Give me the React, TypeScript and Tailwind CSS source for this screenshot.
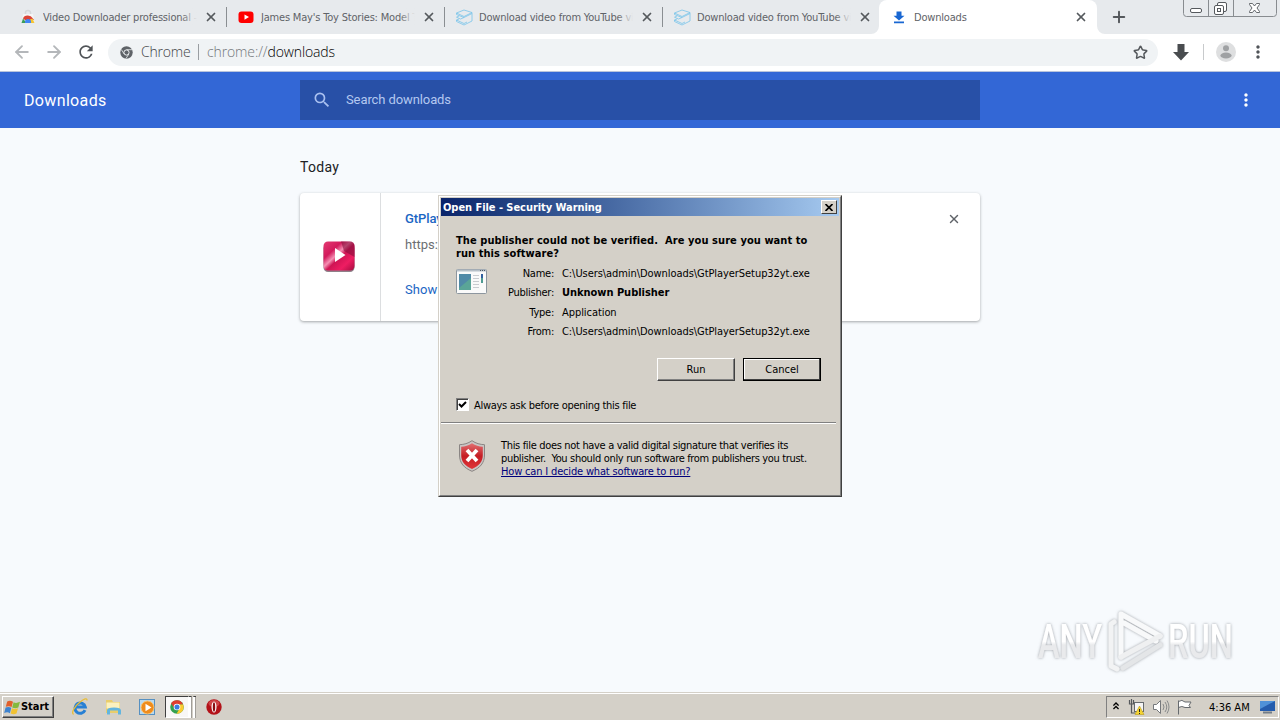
import type { ReactNode } from "react";
import { ArrowLeft, ArrowRight, Plus, Star, X } from "lucide-react";
import { MdMoreVert, MdRefresh, MdSearch } from "react-icons/md";

const StoreIcon = () => (
  <svg width="16" height="16" viewBox="0 0 16 16">
    <path d="M5.500 5V3.500a2.500 2 0 0 1 5 0V5" fill="none" stroke="#d5d8da" strokeWidth="1.500" />
    <path d="M3 5h10l1.500 9h-13z" fill="#f5f5f5" />
    <path d="M3 9.500a5 4 0 0 1 9.500-.5L14 11H5z" fill="#db4437" />
    <path d="M3 9.500L6.500 14H1.500z" fill="#3c9d58" />
    <path d="M12.500 9.500L14.500 14H9l1-3.500z" fill="#f4c534" />
    <path d="M5 12.500a3 2.500 0 0 1 6 0V14H5z" fill="#4285f4" />
  </svg>
);

const YouTubeIcon = () => (
  <svg width="16" height="16" viewBox="0 0 16 16">
    <rect x="0.500" y="2.500" width="15" height="11.500" rx="3" fill="#f00" />
    <path d="M6.500 5.500v5.200L11 8.100z" fill="#fff" />
  </svg>
);

const BoxIcon = () => (
  <svg width="17" height="17" viewBox="0 0 17 17" fill="none" stroke="#79c4ea" strokeWidth="0.800">
    <path d="M.5 4L8 1l8 2.500-8 4zM.5 4v1.500L8 8.500l8-4M8 8.500L4.500 10 .5 8.200 3 7M16 3.500v8.500l-8 4-7.500-3.500v-1.500L3 10M.5 11l7.500 3.500 3-1.500" />
  </svg>
);

const DownloadIcon = () => (
  <svg width="16" height="16" viewBox="0 0 16 16" fill="#1967d2">
    <path d="M5.500 2.500h5v4.200h3L8 11.600 2.500 6.700h3zM3 12.500h10v1.800H3z" />
  </svg>
);

const tabs = [
  { title: "Video Downloader professional - Chr", icon: <StoreIcon /> },
  { title: "James May's Toy Stories: Model Trai", icon: <YouTubeIcon /> },
  { title: "Download video from YouTube via", icon: <BoxIcon /> },
  { title: "Download video from YouTube via", icon: <BoxIcon /> },
];

function Tab({ title, icon, active }: { title: string; icon: ReactNode; active?: boolean }) {
  return (
    <div
      className={
        active
          ? "relative flex h-[34px] w-[218px] items-center rounded-t-lg bg-white pl-3 pr-[9px]"
          : "flex h-[34px] w-[218px] items-center pl-3 pr-2"
      }
    >
      <div className="flex w-[23px] shrink-0">{icon}</div>
      <div className="relative w-[154px] overflow-hidden whitespace-nowrap pt-[2px] text-[11px] tracking-[-0.190px] text-[#5f6368]">
        {title}
        {!active && <div className="absolute inset-y-0 right-0 w-4 bg-linear-to-r from-transparent to-[#e7eaed]" />}
      </div>
      <X className="ml-auto size-[14px] text-[#55595d]" strokeWidth={3} />
    </div>
  );
}

function WindowButtons() {
  return (
    <svg className="ml-auto mr-[3px] self-start" width="94" height="17" viewBox="0 0 94 17" fill="none" stroke="#888c90">
      <path d="M.5 0v13.500a3 3 0 0 0 3 3h87a3 3 0 0 0 3-3V0M25.500 0v16M50.500 0v16" />
      <g stroke="#55595d">
        <rect x="7.500" y="8.500" width="11" height="4" rx="1.500" fill="#fff" />
        <rect x="34.500" y="2.500" width="9" height="9" rx="1.500" fill="#fff" />
        <rect x="31.500" y="5.500" width="9" height="9" rx="1.500" fill="#fff" />
        <rect x="34.500" y="8.500" width="3" height="3" />
        <path d="M66.500 3.500h3l2 2.500 2-2.500h3v1L74 8l2.500 3.500v1h-3l-2-2.500-2 2.500h-3v-1L69 8l-2.500-3.500z" fill="#fff" strokeWidth="0.900" />
      </g>
    </svg>
  );
}

function TabStrip() {
  return (
    <div className="flex h-[34px] items-center bg-[#e7eaed] pl-2">
      {tabs.map((tab, i) => (
        <div key={i} className="flex items-center">
          <Tab {...tab} />
          {i < 3 && <div className="-mr-px h-5 w-px bg-[#8a8e92]" />}
        </div>
      ))}
      <div className="relative -ml-px flex">
        <Tab title="Downloads" icon={<DownloadIcon />} active />
        <svg className="absolute -left-2 bottom-0" width="8" height="8"><path d="M8 0a8 8 0 0 1-8 8h8z" fill="#fff" /></svg>
        <svg className="absolute -right-2 bottom-0" width="8" height="8"><path d="M0 0a8 8 0 0 0 8 8H0z" fill="#fff" /></svg>
      </div>
      <Plus className="ml-[13px] size-[18px] text-[#55595d]" strokeWidth={2.600} />
      <WindowButtons />
    </div>
  );
}

function Toolbar() {
  return (
    <div className="flex h-[38px] items-center border-b border-[#b9c4dc] bg-white pb-px pl-3">
      <ArrowLeft className="size-5 text-[#b4b7ba]" strokeWidth={2.200} />
      <ArrowRight className="ml-3 size-5 text-[#b4b7ba]" strokeWidth={2.200} />
      <MdRefresh className="ml-3 size-5 text-[#505458]" />
      <div className="ml-3 flex h-[27px] w-[1050px] items-center rounded-full bg-[#f0f3f5] pl-3 pr-[10px] font-['Open_Sans',sans-serif] text-[14px] text-[#3f4347]">
        <svg width="13" height="13" viewBox="0 0 13 13">
          <circle cx="6.500" cy="6.500" r="6.200" fill="#5f6368" />
          <circle cx="6.500" cy="6.500" r="2.600" fill="#5f6368" stroke="#eef1f3" />
          <path d="M6.500 3.700h5.500M4.200 8L1.300 3.500M8.900 8l-3 4.600" stroke="#eef1f3" strokeWidth="0.800" />
        </svg>
        <span className="ml-[8px] w-[50px] whitespace-nowrap pb-px font-light tracking-[-0.200px]">Chrome</span>
        <div className="ml-[7px] h-4 w-px bg-[#9a9ea2]" />
        <span className="ml-[8px] pb-px font-light tracking-[-0.120px] text-[#73777b]">
          chrome://<span className="text-black">downloads</span>
        </span>
        <Star className="ml-auto size-[15px] text-[#55595d]" strokeWidth={2.400} />
      </div>
      <svg className="ml-[15px]" width="16" height="17" viewBox="0 0 16 17">
        <path d="M4.500 0h7v8h4.500L8 16.500 0 8h4.500z" fill="#494c4f" />
      </svg>
      <div className="ml-[14px] h-4 w-px bg-[#c8cacc]" />
      <svg className="ml-3" width="20" height="20" viewBox="0 0 20 20">
        <circle cx="10" cy="10" r="10" fill="#dedfe0" />
        <circle cx="10" cy="6.200" r="3" fill="#9fa1a3" />
        <ellipse cx="10" cy="13.500" rx="5.600" ry="3" fill="#9fa1a3" />
      </svg>
      <MdMoreVert className="ml-[12px] size-5 text-[#505458]" />
    </div>
  );
}

function DownloadsHeader() {
  return (
    <div className="flex h-14 items-center bg-[#3367d6] font-[Roboto,sans-serif] text-white">
      <h1 className="w-[300px] pl-6 pt-[2px] text-[16px] tracking-[0.350px]">Downloads</h1>
      <div className="flex h-10 w-[680px] items-center bg-[#2850a7] pl-3">
        <MdSearch className="size-5 text-[#a9c0f0]" />
        <span className="ml-[14px] text-[13px] tracking-[-0.100px] text-[#b4c8f0]">Search downloads</span>
      </div>
      <MdMoreVert className="ml-auto mr-6 size-5" />
    </div>
  );
}

function DownloadsPage() {
  return (
    <div className="flex-1 bg-[#f7fafd] pt-[31px] font-[Roboto,sans-serif]">
      <div className="mx-auto w-[680px]">
        <h2 className="h-[34px] text-[14px] leading-4 tracking-[0.300px] text-[#202124]">Today</h2>
        <div className="flex h-32 rounded-sm bg-white shadow-[0_1px_3px_rgba(60,64,67,0.45)]">
          <div className="flex w-[81px] items-center justify-center border-r border-[#dcdee0] pr-[2px]">
            <svg width="32" height="32" viewBox="0 0 32 32">
              <defs>
                <linearGradient id="player" x1="0" y1="0" x2="1" y2="1">
                  <stop offset="0" stopColor="#e43a72" />
                  <stop offset="0.300" stopColor="#d31a5c" />
                  <stop offset="0.440" stopColor="#f590b4" />
                  <stop offset="0.540" stopColor="#cf1454" />
                  <stop offset="0.750" stopColor="#ee1d62" />
                  <stop offset="1" stopColor="#a50c40" />
                </linearGradient>
              </defs>
              <rect x="0.500" y="3" width="31" height="28" rx="4.500" fill="#8f8089" />
              <rect x="0.500" y="0.500" width="31" height="29" rx="4.500" fill="url(#player)" />
              <path d="M18 .5h9a4.500 4.500 0 0 1 4.500 4.500v11L21 10z" fill="#870f3c" opacity="0.600" />
              <path d="M12 7v14l10.500-7z" fill="#fff" />
            </svg>
          </div>
          <div className="flex-1 pl-6 pt-[18px] text-[13px] leading-4 text-[#1b66c4]">
            <p className="tracking-[-0.100px] font-medium">GtPlayerSetup32yt.exe</p>
            <p className="mt-[10px] text-[#6b6f73]">https://gtplayer.com/</p>
            <p className="mt-[29px] tracking-[0.100px]">Show in folder</p>
          </div>
          <X className="mr-[19px] mt-[19px] size-[14px] text-[#5f6368]" strokeWidth={2.400} />
        </div>
      </div>
    </div>
  );
}

const fileDetails = [
  { label: "Name:", value: "C:\\Users\\admin\\Downloads\\GtPlayerSetup32yt.exe" },
  { label: "Publisher:", value: "Unknown Publisher", bold: true },
  { label: "Type:", value: "Application" },
  { label: "From:", value: "C:\\Users\\admin\\Downloads\\GtPlayerSetup32yt.exe" },
];

const ShieldIcon = () => (
  <svg width="28" height="32" viewBox="0 0 28 32">
    <defs>
      <linearGradient id="shield" x1="0" y1="0" x2="0" y2="1">
        <stop offset="0" stopColor="#e27072" />
        <stop offset="0.500" stopColor="#c51d24" />
        <stop offset="1" stopColor="#e0353a" />
      </linearGradient>
    </defs>
    <path d="M14 .7C10 3.500 6 4.500 1.500 4.700V15c0 8 4.500 13 12.500 16.300C22 28 26.500 23 26.500 15V4.700C22 4.500 18 3.500 14 .7z" fill="#c9c5c4" stroke="#8a8583" />
    <path d="M14 3.200C10.500 5.500 7 6.500 3.200 6.800V15c0 6.800 4 11 10.800 14 6.800-3 10.800-7.200 10.800-14V6.800C21 6.500 17.500 5.500 14 3.200z" fill="url(#shield)" />
    <path d="M9 10L19 21M19 10L9 21" stroke="#fff" strokeWidth="3.800" />
  </svg>
);

const ProgramIcon = () => (
  <svg width="31" height="27" viewBox="0 0 31 27">
    <rect x="0.500" y="1.500" width="30" height="24" rx="1" fill="#fafafa" stroke="#8d969f" />
    <path d="M1 2.500h29" stroke="#b7c0c8" strokeWidth="2" />
    <path d="M24 2.500h1m1 0h1m1 0h1" stroke="#4e5a66" />
    <rect x="3" y="6" width="12" height="16" fill="#5aa597" />
    <path d="M3 6h12v4L3 20z" fill="#4b7fae" opacity="0.700" />
    <path d="M17 7.500h6M17 10.500h6M17 13.500h6M17 16.500h6M17 19.500h6" stroke="#c9ccd0" />
    <rect x="25" y="6" width="2" height="9" fill="#4e9a92" />
    <path d="M25 6h2v4h-2z" fill="#315f9e" />
  </svg>
);

function SecurityDialog() {
  return (
    <div className="absolute left-[438px] top-[195px] h-[302px] w-[404px] border border-b-[#404040] border-l-[#d4d0c8] border-r-[#404040] border-t-[#d4d0c8] bg-[#d4d0c8] text-[11px] leading-[13px] text-black">
      <div className="flex h-[300px] flex-col border border-b-[#808080] border-l-white border-r-[#808080] border-t-white p-px">
        <div className="flex h-[18px] items-center bg-linear-to-r from-[#0a246a] to-[#a6caf0] pl-[2px] pr-[2px] font-bold text-white">
          <span className="tracking-[-0.050px]">Open File - Security Warning</span>
          <div className="ml-auto flex h-[14px] w-4 items-center justify-center border border-b-[#404040] border-l-white border-r-[#404040] border-t-white bg-[#d4d0c8]">
            <svg width="8" height="7" viewBox="0 0 8 7"><path d="M0.500 0l7 7M7.500 0l-7 7" stroke="#000" strokeWidth="1.700" /></svg>
          </div>
        </div>
        <p className="ml-[15px] mt-[18px] whitespace-nowrap font-bold tracking-[0.070px]">
          The publisher could not be verified.&nbsp; Are you sure you want to
          <br />
          run this software?
        </p>
        <div className="ml-[15px] mt-[7px] flex">
          <div className="mt-px"><ProgramIcon /></div>
          <div className="w-[330px] pl-5">
            {fileDetails.map((row) => (
              <div key={row.label} className="flex h-[19.300px] whitespace-nowrap">
                <div className="flex w-[47px] justify-end tracking-[-0.250px]">{row.label}</div>
                <span className={row.bold ? "ml-[8px] font-bold tracking-[-0.030px]" : "ml-[8px] tracking-[-0.065px]"}>
                  {row.value}
                </span>
              </div>
            ))}
          </div>
        </div>
        <div className="mr-[18px] mt-[14px] flex justify-end gap-2">
          <button className="h-[23px] w-[78px] border border-b-[#404040] border-l-white border-r-[#404040] border-t-white shadow-[inset_-1px_-1px_#808080]">
            Run
          </button>
          <button className="h-[23px] w-[78px] border border-black shadow-[inset_-1px_-1px_#404040,inset_1px_1px_#fff]">
            Cancel
          </button>
        </div>
        <div className="ml-[15px] mt-[16px] flex items-center">
          <div className="flex size-[13px] items-center justify-center border border-b-white border-l-[#808080] border-r-white border-t-[#808080] bg-white shadow-[inset_1px_1px_#404040]">
            <svg width="9" height="9" viewBox="0 0 9 9"><path d="M1 4l2.500 2.500L8 2" fill="none" stroke="#000" strokeWidth="2" /></svg>
          </div>
          <span className="ml-[5px] whitespace-nowrap pt-[2px] tracking-[-0.290px]">Always ask before opening this file</span>
        </div>
        <div className="mr-[3px] mt-[10px] h-[2px] border-b border-t border-b-white border-t-[#808080]" />
        <div className="mt-[15px] flex pl-[17px]">
          <div className="mt-[1px]"><ShieldIcon /></div>
          <p className="ml-[15px] whitespace-nowrap tracking-[-0.330px]">
            This file does not have a valid digital signature that verifies its
            <br />
            publisher.&nbsp; You should only run software from publishers you trust.
            <br />
            <a className="tracking-[-0.170px] text-[#00007b] underline">How can I decide what software to run?</a>
          </p>
        </div>
      </div>
    </div>
  );
}

function Watermark() {
  return (
    <svg className="absolute left-[1034px] top-[605px]" width="204" height="72" viewBox="0 0 204 72">
      <defs>
        <linearGradient id="mark" x1="0" y1="0" x2="0" y2="1">
          <stop offset="0.500" stopColor="#fff" />
          <stop offset="0.560" stopColor="#e9eaec" />
        </linearGradient>
        <filter id="soft" x="-10%" y="-10%" width="120%" height="120%">
          <feDropShadow dx="0" dy="0" stdDeviation="1.600" floodColor="#8b9096" floodOpacity="0.850" />
        </filter>
      </defs>
      <g filter="url(#soft)" fill="url(#mark)" fontFamily="Roboto, sans-serif" fontSize="49" fontWeight="500">
        <text x="4" y="53" textLength="64" lengthAdjust="spacingAndGlyphs">ANY</text>
        <text x="134" y="53" textLength="65" lengthAdjust="spacingAndGlyphs">RUN</text>
        <g fill="none" stroke="#f8f9fa" strokeWidth="5" strokeLinejoin="round" strokeLinecap="round">
          <path d="M80 17l-3 2v42l6 3" stroke="#f2f3f4" />
          <path d="M122 36L90 18M126 31L87 9v43" />
          <path d="M87 52l39-21" stroke="#eff0f1" />
          <path d="M89 63l37-23" stroke="#e4e6e8" />
        </g>
      </g>
    </svg>
  );
}

const IeIcon = () => (
  <svg width="18" height="18" viewBox="0 0 18 18" fill="none">
    <path d="M14 12.200A5.200 5.200 0 1 1 14.300 9H5.500" stroke="#2880d4" strokeWidth="3" />
    <path d="M2.500 16.500c-2.500-2 1-8 6-12S16-.2 16 2.500" stroke="#e9bd35" strokeWidth="1.300" />
  </svg>
);

const FolderIcon = () => (
  <svg width="18" height="18" viewBox="0 0 18 18">
    <path d="M1 2h6l1 2h7v11H1z" fill="#e9cd6c" />
    <path d="M1.500 4.500h13v6h-13z" fill="#fbf1bf" />
    <path d="M3.500 16.500v-4c0-2 11-2 11 0v4" fill="none" stroke="#62b5df" strokeWidth="3" />
  </svg>
);

const MediaIcon = () => (
  <svg width="17" height="17" viewBox="0 0 17 17">
    <rect x="0.500" y="0.500" width="15" height="15" fill="#b9d9ef" stroke="#5690c1" />
    <circle cx="8.500" cy="8.500" r="6.500" fill="#ef8c1c" stroke="#f8c271" />
    <path d="M6.500 4.800v7.400l6-3.700z" fill="#fff" />
  </svg>
);

const ChromeIcon = () => (
  <svg width="14" height="14" viewBox="0 0 16 16">
    <circle cx="8" cy="8" r="7.800" fill="#34a14f" />
    <path d="M1.200 4A7.800 7.800 0 0 1 15 5H8L5 9z" fill="#df3d30" />
    <path d="M15 5A7.800 7.800 0 0 1 7.500 15.800L11 9.500 8 5z" fill="#fccb2f" />
    <circle cx="8" cy="8" r="3.800" fill="#fff" />
    <circle cx="8" cy="8" r="2.900" fill="#3c7ce0" />
  </svg>
);

const OperaIcon = () => (
  <svg width="16" height="16" viewBox="0 0 16 16">
    <circle cx="8" cy="8" r="7.700" fill="#b31219" />
    <ellipse cx="8" cy="4.500" rx="5.500" ry="3.500" fill="#dc5a5c" opacity="0.700" />
    <ellipse cx="8" cy="8" rx="2.500" ry="5.500" fill="#fff" />
    <ellipse cx="8" cy="8" rx="1.200" ry="4.700" fill="#8a0c12" />
  </svg>
);

const StartFlag = () => (
  <svg width="16" height="15" viewBox="0 0 16 15">
    <path d="M3.200 1.500Q6 0 9 1.800L7.600 7Q5 5.500 1.800 6.800z" fill="#e2602b" />
    <path d="M9.600 2.200Q12 3.800 16 1.800L14.300 7.500Q11 9 8.200 7.400z" fill="#84b93e" />
    <path d="M1.600 7.600Q4.500 6.300 7.300 7.800L5.900 13.200Q3.500 11.500.2 13z" fill="#3e83cf" />
    <path d="M8 8.200Q10.500 9.800 14 8.300L12.500 13.500Q9.500 15 6.600 13.400z" fill="#f1c232" />
  </svg>
);

function Taskbar() {
  return (
    <div className="flex h-[27px] items-center border-t border-white bg-[#d4d0c8] pl-[2px] text-[11px] shadow-[0_-1px_#d4d0c8]">
      <button className="flex h-[22px] w-[52px] items-center border border-b-[#404040] border-l-white border-r-[#404040] border-t-white pl-px font-bold tracking-[-0.050px] shadow-[inset_-1px_-1px_#808080]">
        <StartFlag />
        <span className="ml-px pt-px">Start</span>
      </button>
      <div className="ml-[17px] flex items-center gap-4">
        <IeIcon />
        <FolderIcon />
        <MediaIcon />
      </div>
      <div className="ml-[9px] flex h-[22px] w-[24px] items-center border border-b-white border-l-[#404040] border-r-white border-t-[#404040] bg-[#f8f7f6] pl-1">
        <ChromeIcon />
      </div>
      <div className="flex h-[22px] w-[7px] justify-between border-t border-dashed border-[#404040]">
        <div className="w-[3px] border-r border-[#a09d98] bg-white" />
        <div className="w-[3px] border-r border-[#a09d98] bg-white" />
      </div>
      <div className="ml-[10px]"><OperaIcon /></div>
      <div className="ml-auto mr-px flex h-[22px] w-[173px] items-center border border-b-white border-l-[#808080] border-r-white border-t-[#808080]">
        <svg className="mb-[2px] ml-[6px]" width="6" height="8" viewBox="0 0 7 9" fill="none" stroke="#000" strokeWidth="1.500">
          <path d="M.5 4l3-3 3 3M.5 8l3-3 3 3" />
        </svg>
        <svg className="ml-[9px]" width="18" height="17" viewBox="0 0 18 17">
          <path d="M1.500 1v4h4V1M3.500 0v14h4" fill="none" stroke="#55585b" strokeWidth="1.200" />
          <rect x="6.500" y="3.500" width="9" height="9" fill="#f5f5f5" stroke="#666a6e" />
          <path d="M11.500 7l4.500 8.500H7z" fill="#f5d432" stroke="#b89b1c" strokeWidth="0.600" />
          <path d="M11.500 10v3m0 1v1" stroke="#222" />
        </svg>
        <svg className="ml-[6px]" width="18" height="16" viewBox="0 0 18 16" fill="none" stroke="#75787b">
          <path d="M1.500 5.500h3l4-4v13l-4-4h-3z" fill="#fff" />
          <path d="M11 5q2 3 0 6M13 3q3.500 5 0 10M15 1.500q4 6.500 0 13" strokeWidth="0.800" />
        </svg>
        <svg className="ml-[6px]" width="17" height="16" viewBox="0 0 17 16" fill="none" stroke="#666a6e">
          <path d="M2.500 15.500v-14M2.500 2.500Q6 0 9 3h6l-2 3.500 1.500 2H9q-3-2-6.500 0" fill="#fff" />
        </svg>
        <span className="ml-[16px] whitespace-nowrap pt-[2px]">4:36 AM</span>
        <svg className="ml-auto mr-[3px]" width="15" height="13" viewBox="0 0 15 13">
          <rect width="15" height="10" fill="#245cad" />
          <path d="M0 0h15L0 8z" fill="#4f91d8" />
          <path d="M3 11.500h9" stroke="#727d88" strokeWidth="2" />
        </svg>
      </div>
    </div>
  );
}

export default function App() {
  return (
    <div className="relative flex h-[720px] w-[1280px] flex-col overflow-hidden font-['DejaVu_Sans_Condensed','DejaVu_Sans',sans-serif]">
      <TabStrip />
      <Toolbar />
      <DownloadsHeader />
      <DownloadsPage />
      <Taskbar />
      <Watermark />
      <SecurityDialog />
    </div>
  );
}
